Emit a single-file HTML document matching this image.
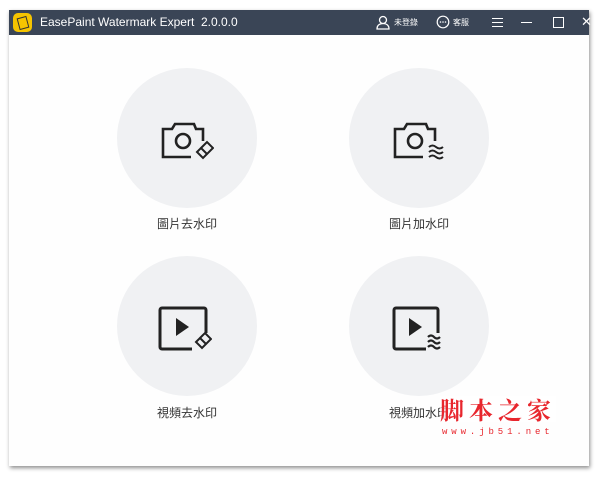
<!DOCTYPE html>
<html><head><meta charset="utf-8"><style>
body{margin:0;width:600px;height:478px;background:#fff;position:relative;overflow:hidden;font-family:"Liberation Sans","Noto Sans CJK TC",sans-serif}
.win{position:absolute;left:9px;top:10px;width:580px;height:456px;background:#fefefe;box-shadow:1px 2px 4px rgba(0,0,0,.45)}
.tb{position:absolute;left:0;top:0;width:580px;height:25px;background:#3a4556;color:#fff;font-size:12px}
.c{position:absolute;width:140px;height:140px;border-radius:50%;background:#f0f1f3}
.l{position:absolute;width:140px;text-align:center;font-size:12px;color:#333}
svg{position:absolute}
</style></head><body>
<div class="win">
<div class="tb">
<div style="position:absolute;left:4px;top:3px;width:19px;height:19px;border-radius:5px;background:#f5c400"></div>
<div style="position:absolute;left:9px;top:7px;width:8px;height:10px;border:1px solid #333;transform:rotate(-15deg)"></div>
<div style="position:absolute;left:31px;top:5px">EasePaint Watermark Expert&nbsp; 2.0.0.0</div>
<svg style="left:367px;top:5px" width="14" height="15" viewBox="0 0 14 15"><circle cx="7" cy="5" r="3.5" fill="none" stroke="#fff" stroke-width="1.3"/><path d="M1 14c0-4 3-5.5 6-5.5s6 1.5 6 5.5z" fill="none" stroke="#fff" stroke-width="1.3"/></svg>
<div style="position:absolute;left:385px;top:7px;font-size:8px">未登錄</div>
<svg style="left:427px;top:5px" width="14" height="14" viewBox="0 0 14 14"><circle cx="7" cy="7" r="5.8" fill="none" stroke="#fff" stroke-width="1.2"/><circle cx="4.5" cy="7" r=".8" fill="#fff"/><circle cx="7" cy="7" r=".8" fill="#fff"/><circle cx="9.5" cy="7" r=".8" fill="#fff"/></svg>
<div style="position:absolute;left:444px;top:7px;font-size:8px">客服</div>
<div style="position:absolute;left:483px;top:8px;width:11px;height:1px;background:#fff;box-shadow:0 4px 0 #fff,0 8px 0 #fff"></div>
<div style="position:absolute;left:512px;top:12px;width:11px;height:1px;background:#fff"></div>
<div style="position:absolute;left:544px;top:7px;width:9px;height:9px;border:1px solid #fff"></div>
<div style="position:absolute;left:572px;top:4px;font-size:13px">✕</div>
</div>
<div class="c" style="left:108px;top:58px"></div>
<div class="c" style="left:340px;top:58px"></div>
<div class="c" style="left:108px;top:246px"></div>
<div class="c" style="left:340px;top:246px"></div>
<div class="l" style="left:108px;top:205px">圖片去水印</div>
<div class="l" style="left:340px;top:205px">圖片加水印</div>
<div class="l" style="left:108px;top:394px">視頻去水印</div>
<div class="l" style="left:340px;top:394px">視頻加水印</div>
</div>
<svg style="left:160px;top:117px" width="54" height="44" viewBox="0 0 54 44"><path d="M31 40H3V12h9l3-5h19l2 5h7v12" fill="none" stroke="#222" stroke-width="2.6"/><circle cx="23" cy="24" r="7" fill="none" stroke="#222" stroke-width="2.6"/><path d="M41 31l6-6 6 6-6 6zM37 35l4-4 6 6-4 4z" fill="none" stroke="#222" stroke-width="2"/></svg>
<svg style="left:392px;top:117px" width="54" height="44" viewBox="0 0 54 44"><path d="M31 40H3V12h9l3-5h19l2 5h7v12" fill="none" stroke="#222" stroke-width="2.6"/><circle cx="23" cy="24" r="7" fill="none" stroke="#222" stroke-width="2.6"/><path d="M37 30q3.5-3 7 0t7 0M37 35q3.5-3 7 0t7 0M37 40q3.5-3 7 0t7 0" fill="none" stroke="#222" stroke-width="2"/></svg>
<svg style="left:158px;top:305px" width="54" height="48" viewBox="0 0 54 48"><path d="M34 44H4a2 2 0 0 1-2-2V5a2 2 0 0 1 2-2h42a2 2 0 0 1 2 2v23" fill="none" stroke="#222" stroke-width="3"/><path d="M18 13v18l13-9z" fill="#222"/><path d="M42 33l5-5 6 6-5 5zM38 37l4-4 6 6-4 4z" fill="none" stroke="#222" stroke-width="2"/></svg>
<svg style="left:392px;top:305px" width="54" height="48" viewBox="0 0 54 48"><path d="M34 44H4a2 2 0 0 1-2-2V5a2 2 0 0 1 2-2h40a2 2 0 0 1 2 2v23" fill="none" stroke="#222" stroke-width="3"/><path d="M17 13v18l13-9z" fill="#222"/><path d="M36 32q3-3 6 0t6 0M36 37q3-3 6 0t6 0M36 42q3-3 6 0t6 0" fill="none" stroke="#222" stroke-width="2.2"/></svg>
<div style="position:absolute;left:440px;top:396px;font-size:24px;line-height:26px;color:#e8262d;letter-spacing:5px;font-weight:bold;font-family:'Noto Serif CJK SC',serif;background:rgba(255,255,255,.6)">脚本之家</div>
<div style="position:absolute;left:442px;top:427px;font-size:9px;color:#e8262d;letter-spacing:3.9px;font-family:'Liberation Mono',monospace">www.jb51.net</div>
</body></html>
